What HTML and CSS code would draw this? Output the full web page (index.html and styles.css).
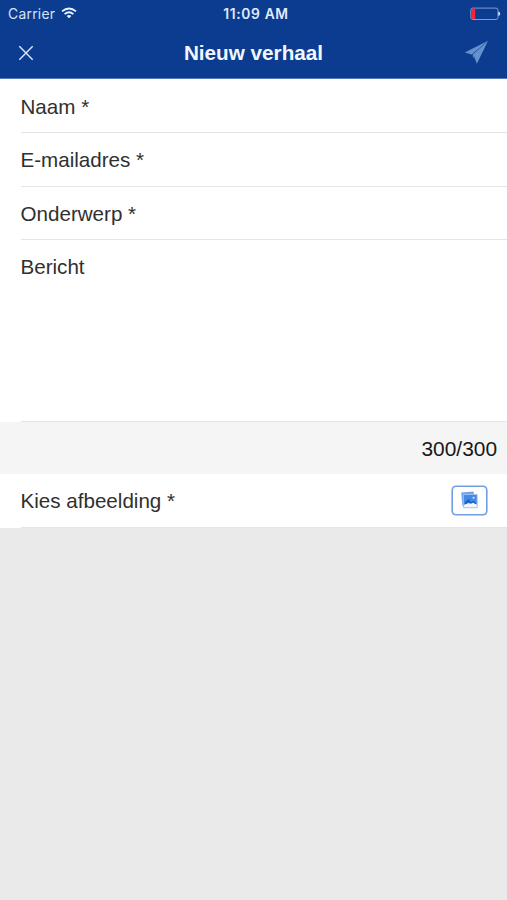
FILE: index.html
```html
<!DOCTYPE html>
<html lang="nl">
<head>
<meta charset="utf-8">
<title>Nieuw verhaal</title>
<link rel="stylesheet" href="styles.css">
</head>
<body>
<header class="header">
  <div class="status">
    <div class="carrier"><span>Carrier</span>
      <svg class="wifi" width="16" height="12" viewBox="0 0 16 12" fill="none" stroke="#e8f1ff" stroke-width="1.9"><path d="M1 4.4Q8-1.6 15 4.4M3.6 7.1Q8 3.3 12.4 7.1"/><path d="M5.6 8.9Q8 7 10.4 8.9L8 11.3Z" fill="#e8f1ff" stroke="none"/></svg>
    </div>
    <span class="time">11:09 AM</span>
    <svg class="battery" width="31" height="14" viewBox="0 0 31 14"><rect x=".8" y="1.1" width="27.2" height="11.4" rx="2" fill="none" stroke="#7f9dce"/><path d="M2.8 1.6H5.2V12H2.8Q1.3 12 1.3 10.5V3.1Q1.3 1.6 2.8 1.6Z" fill="#f32638"/><path d="M28.3 4.6Q30.2 5 30.2 6.8T28.3 9Z" fill="#d5e4fb"/></svg>
  </div>
  <div class="nav">
    <svg class="close" width="16" height="16" viewBox="0 0 16 16" stroke="#dceaff" stroke-width="1.4"><path d="M1.3 1.3 14.7 14.7M14.7 1.3 1.3 14.7"/></svg>
    <h1 class="title">Nieuw verhaal</h1>
    <svg class="send" width="25" height="25" viewBox="0 0 25 25" fill="#6592cf"><path d="M24 .8 .8 12.4 7.7 14.6Z"/><path d="M24 .8 9.6 15.6 12.9 23.7Z"/><path d="M24 .8 8.7 14.6 9 18.2 10.2 15.6Z"/></svg>
  </div>
</header>
<main>
  <div class="row"><label class="field">Naam *</label></div>
  <div class="row"><label class="field">E-mailadres *</label></div>
  <div class="row"><label class="field">Onderwerp *</label></div>
  <div class="row message"><label class="field">Bericht</label></div>
  <div class="counter">300/300</div>
  <div class="row image-row">
    <div class="field"><span class="image-label">Kies afbeelding *</span>
      <button class="picker" aria-label="Kies afbeelding">
        <svg width="19" height="18" viewBox="0 0 19 18"><path d="M1.2 1.6 13.4.6 14.3 3.4 4.3 3.6 4.6 15 2.4 14.7Z" fill="#72a4ed"/><path d="M3.6 3.5H17.2V16.7H3.6Z" fill="#f4f8ff" stroke="#8ab4f0" stroke-width=".8"/><path d="M4 4H16.8V13.6H4Z" fill="#4789e2"/><path d="M5 13V11L8.5 8 11.4 11 13.3 9.7 16.2 12V13Z" fill="#1767ca"/><path d="M5.3 13.6 8.5 12.1 11 12.8 13 11.8 16.4 13.6V14H5.3Z" fill="#f4f8ff"/><circle cx="13.6" cy="6.8" r="1" fill="#d6e8ff"/></svg>
      </button>
    </div>
  </div>
</main>
</body>
</html>
```
FILE: styles.css
```css
* { box-sizing: border-box; }
body {
  margin: 0;
  min-height: 900px;
  background: #eaeaea;
  color: #303030;
  font-family: "Liberation Sans", Arial, sans-serif;
  font-size: 20.6px;
}
.header {
  height: 79px;
  background: #0c3c8f;
  border-bottom: 1px solid #5279b5;
}
.status {
  height: 27px;
  padding: 0 7px 0 8px;
  display: grid;
  grid-template-columns: 1fr auto 1fr;
  align-items: center;
  color: #d5e4fb;
  font-family: Inter, sans-serif;
  font-size: 13.8px;
}
.carrier { display: flex; align-items: center; gap: 5.5px; letter-spacing: .3px; }
.wifi { margin-bottom: 2px; }
.time { margin-left: 4px; font-size: 13.8px; font-weight: 600; letter-spacing: .65px; color: #e0ebfd; }
.battery { justify-self: end; margin-right: -1px; }
.nav {
  height: 51px;
  padding: 0 18px;
  display: grid;
  grid-template-columns: 1fr auto 1fr;
  align-items: center;
}
.title { margin: 0; font-size: 20.7px; line-height: 24px; color: #f2f7ff; }
.send { justify-self: end; }
.row { height: 53.8px; padding-left: 20.5px; background: #fff; }
.field {
  display: flex;
  height: 100%;
  padding-top: 15.5px;
  line-height: 24px;
  border-bottom: 1px solid #e5e5e5;
}
.message { height: 181.6px; }
.message .field { padding-top: 14.8px; }
.counter {
  height: 52px;
  padding-right: 10px;
  background: #f5f5f5;
  color: #181818;
  font-size: 20.9px;
  line-height: 54px;
  text-align: right;
}
.image-row .field {
  align-items: center;
  justify-content: space-between;
  padding: 0 20px 0 0;
}
.image-label { padding-top: 2px; }
.picker {
  width: 35px;
  height: 29px;
  padding: 0;
  display: grid;
  place-items: center;
  background: #fff;
  border: 1px solid #6d9fe2;
  border-radius: 4px;
  box-shadow: 0 0 0 .6px #6d9fe2;
}
```
